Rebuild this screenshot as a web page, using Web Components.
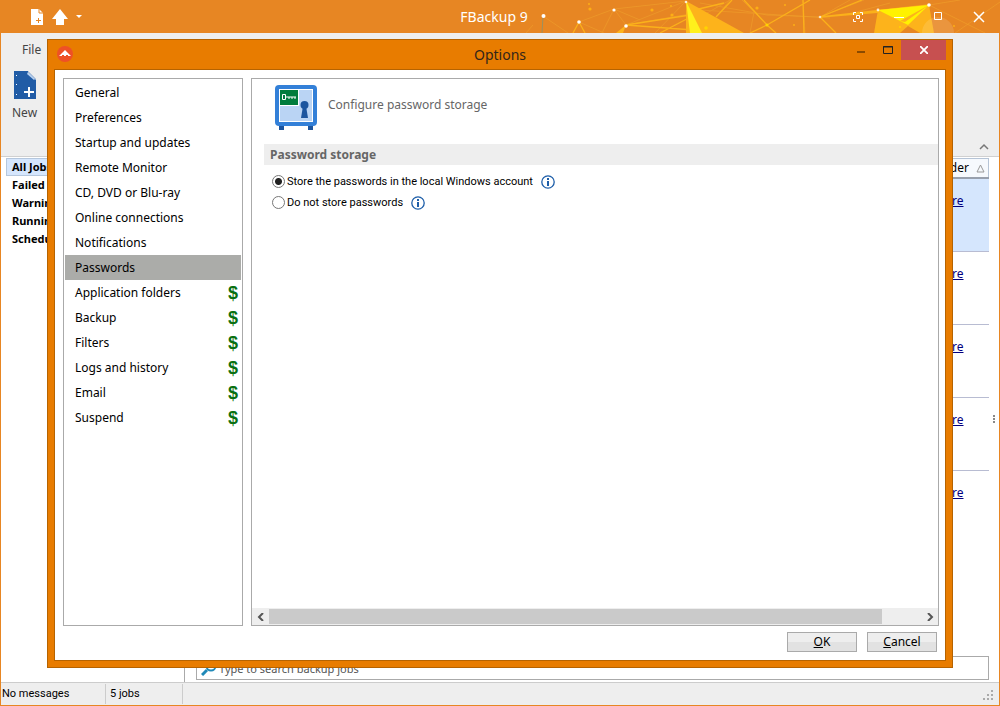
<!DOCTYPE html>
<html lang="en">
<head>
<meta charset="utf-8">
<title>FBackup 9</title>
<style>
html, body { margin: 0; height: 100%; }
body { font-family: "Noto Sans", "DejaVu Sans", sans-serif; font-size: 12px; color: #000; }
</style>
</head>
<body>
<fb-app></fb-app>
<script>
const define = (name, html, setup) => {
  const template = document.createElement('template');
  template.innerHTML = html;
  customElements.define(name, class extends HTMLElement {
    constructor() {
      super();
      this.attachShadow({ mode: 'open' }).append(template.content.cloneNode(true));
    }
    connectedCallback() { if (setup) setup(this, this.shadowRoot); }
  });
};

define('fb-titlebar', `
<style>
:host { display: grid; grid-template-columns: 1fr auto 1fr; align-items: center; height: 33px; background: #e78623; color: #fff; position: relative; overflow: hidden; }
.art { position: absolute; right: 0; top: 0; width: 480px; height: 33px; }
.tools, .win { display: flex; align-items: center; position: relative; }
.tools { padding-left: 30px; gap: 8px; }
.win { justify-content: flex-end; gap: 30px; padding-right: 15px; }
h1 { margin: 0; font: 14px/20px "Noto Sans", sans-serif; position: relative; padding-right: 12px; }
button { border: 0; padding: 0; background: none; display: block; color: #fff; }
svg { display: block; }
</style>
<svg class="art" viewBox="520 0 480 33" preserveAspectRatio="xMaxYMid slice" aria-hidden="true">
  <g stroke="#f0a02c" fill="none" stroke-width="1" opacity=".6">
    <path d="M526 33 533 25M543 16 568 33M579 22 614 9 626 25M614 9 686 1M602 33 614 9 640 20M579 22 604 33M626 25 686 1M626 25 690 14M655 33 686 1"/>
    <path d="M700 3 767 15 820 17 864 0M730 0 700 17M716 17 730 0M803 0 805 33M820 17 850 0M767 25 742 0M750 33 754 12M700 10 830 18M929 5 985 33M955 33 1000 2M929 5 960 0M845 15 890 3"/>
  </g>
  <g stroke="#fbb11a" fill="none" stroke-width="1.3">
    <path d="M573 33 579 22 585 33M626 25 690 15M626 25 720 32M660 33 700 12M744 0 767 25 776 33M767 25 810 0M767 25 750 33M803 0 804 33M820 17 929 5M820 17 836 33M820 17 862 0M820 17 880 12M716 17 732 0M686 12 724 3"/>
  </g>
  <path d="m543 16-1 17" stroke="#9b9060" fill="none"/>
  <path d="m616 33 10-8-3 8z" fill="#fdb31b"/>
  <path d="m686 1 58 32h-58z" fill="#fdb31b"/>
  <path d="m686 1 16 32h-12z" fill="#fff01c"/>
  <path d="m878 10 51-5 5 28h-60z" fill="#fdb31b"/>
  <path d="m878 10 51-5-21 20z" fill="#fff200"/>
  <path d="m900 21 29-16-24 17z" fill="#fdb31b"/>
  <path d="m900 33 8-7 12 7z" fill="#e78623"/>
  <g fill="#fff"><circle cx="543.500" cy="16" r="2"/><circle cx="579" cy="22" r="1.8"/><circle cx="614" cy="10" r="1.6"/><circle cx="626" cy="26" r="1.8"/><circle cx="929" cy="5" r="1.8"/><circle cx="878" cy="10" r="1.4" opacity=".8"/><circle cx="820" cy="17" r="1.3" opacity=".7"/><circle cx="686" cy="2" r="1.3" opacity=".8"/></g>
  <g fill="#ffd400"><circle cx="767" cy="25" r="1.5"/><circle cx="706" cy="28" r="1.8"/><circle cx="900" cy="27" r="1"/></g>
  <g fill="#fcae16"><circle cx="590" cy="9" r="1.6"/><circle cx="652" cy="10" r="1.6"/><circle cx="672" cy="15" r="1.6"/><circle cx="757" cy="8" r="1.6"/><circle cx="794" cy="25" r="1"/><circle cx="671" cy="6" r="1"/><circle cx="589" cy="4" r="1"/><circle cx="785" cy="5" r="1"/><circle cx="954" cy="26" r="1"/></g>
  <g fill="#fff" opacity=".12"><circle cx="938" cy="33" r="16"/><circle cx="938" cy="33" r="10"/><circle cx="938" cy="33" r="5"/></g>
</svg>
<div class="tools">
  <button aria-label="New backup"><svg width="14" height="16"><path d="M1 0h8l4 4v12H1z" fill="#fff"/><path d="M9 0v4h4" fill="none" stroke="#e78623"/><path d="M8.500 9v5M6 11.500h5" stroke="#e78623"/></svg></button>
  <button aria-label="Upgrade"><svg width="16" height="16"><path d="m8 0 8 10h-4v6H4v-6H0z" fill="#fff"/></svg></button>
  <button aria-label="More tools"><svg width="6" height="4"><path d="M0 0h6L3 3z" fill="#fff"/></svg></button>
</div>
<h1>FBackup 9</h1>
<div class="win">
  <button aria-label="Focus"><svg width="12" height="12" fill="none" stroke="#fff"><path d="M1.500 4V1.500H4M8 1.500h2.500V4M10.500 8v2.500H8M4 10.500H1.500V8M4.500 4.500h3v3h-3z"/></svg></button>
  <button aria-label="Minimize"><svg width="10" height="12"><path d="M0 6.500h10" stroke="#fff"/></svg></button>
  <button aria-label="Maximize"><svg width="9" height="9"><path d="M.5.5h7v7h-7z" fill="none" stroke="#fff"/></svg></button>
  <button aria-label="Close"><svg width="12" height="12"><path d="m1 1 10 10M11 1 1 11" fill="none" stroke="#fff" stroke-width="1.500"/></svg></button>
</div>`);

define('fb-ribbon', `
<style>
:host { display: flex; flex-direction: column; height: 123px; background: #eee; border-bottom: 1px solid #d0d0d0; color: #444; position: relative; }
a { color: inherit; text-decoration: none; padding: 8px 0 0 21px; line-height: 18px; }
.new { border: 0; background: none; padding: 12px 0 0 11px; color: inherit; font: inherit; line-height: 18px; align-self: flex-start; display: grid; justify-items: center; gap: 5px; }
.fold { position: absolute; right: 9px; bottom: 6px; border: 0; padding: 0; background: none; }
svg { display: block; }
</style>
<a href="#file">File</a>
<button class="new"><svg width="24" height="28"><path d="M1 0h14l8 8v20H1z" fill="#215ca6"/><path d="M15 0v1l8 8V8z" fill="#eee"/><path d="m15 1 7 7-1 1-7-6z" fill="#b9d1ef"/><path d="M16 16v10M11 21h10" stroke="#fff" stroke-width="2"/><path d="M3 4h1v1H3zM3 13h1v1H3zM3 23h1v1H3z" fill="#fff"/></svg>New</button>
<button class="fold" aria-label="Collapse ribbon"><svg width="12" height="8"><path d="m2 7 4-4 4 4" fill="none" stroke="#777" stroke-width="1.500"/></svg></button>`);

define('fb-filters', `
<style>
:host { display: block; width: 178px; flex: none; padding: 1px 0 0 5px; border-right: 1px solid #aaa; }
ul { margin: 0; padding: 0; list-style: none; }
a { display: block; height: 18px; box-sizing: border-box; padding-left: 6px; font-size: 11px; line-height: 18px; color: #000; font-weight: 700; text-decoration: none; }
a.on { background: #d5e6fd; outline: 1px solid #b5c7dd; outline-offset: -1px; }
</style>
<ul><li><a class="on" href="#all">All Jobs</a></li><li><a href="#failed">Failed</a></li><li><a href="#warnings">Warnings</a></li><li><a href="#running">Running</a></li><li><a href="#scheduled">Scheduled</a></li></ul>`);

define('fb-jobs', `
<style>
:host { display: flex; flex-direction: column; flex: 1; padding: 1px 10px 2px 11px; position: relative; }
table { width: 100%; border-collapse: collapse; }
th { height: 18px; padding: 0 3px 0 0; border: 1px solid #b6c4d6; border-bottom: 2px solid #98a0ad; background: #f6f9fd; font-weight: 400; font-size: 12px; text-align: right; line-height: 16px; }
th svg { margin-left: 4px; vertical-align: -1px; }
td { height: 59px; padding: 13px 25px 0 0; border-bottom: 1px solid #b8bcd2; text-align: right; vertical-align: top; line-height: 18px; }
tr:last-child td { border: 0; }
tr.on td { background: #d5e6fd; }
a { color: #000080; }
.search { display: flex; align-items: center; margin-top: auto; border: 1px solid #aaa; height: 22px; padding-left: 4px; color: #555; }
input { flex: 1; border: 0; padding: 0 0 0 2px; outline: 0; font: inherit; font-size: 11px; background: none; height: 20px; }
input::placeholder { color: #555; opacity: 1; }
.dots { position: absolute; right: 3px; top: 258px; }
</style>
<table>
<thead><tr><th>Folder <svg width="9" height="9" aria-hidden="true"><path d="m4.500 1 3.500 7H1z" fill="none" stroke="#999"/></svg></th></tr></thead>
<tbody><tr class="on"><td><a href="#1">Restore</a></td></tr><tr><td><a href="#2">Restore</a></td></tr><tr><td><a href="#3">Restore</a></td></tr><tr><td><a href="#4">Restore</a></td></tr><tr><td><a href="#5">Restore</a></td></tr></tbody>
</table>
<label class="search"><svg width="16" height="16" aria-hidden="true" fill="none" stroke="#2089b8"><circle cx="10" cy="6" r="4.500" stroke-width="2"/><path d="m6 10-5 5" stroke-width="3"/></svg><input aria-label="Search" placeholder="Type to search backup jobs"></label>
<svg class="dots" width="3" height="9" aria-hidden="true"><path d="M0 0h2v2H0zM0 3h2v2H0zM0 6h2v2H0z" fill="#888"/></svg>`);

define('fb-status', `
<style>
:host { display: flex; align-items: stretch; height: 22px; background: #eee; border-top: 1px solid #ccc; font-family: Roboto, sans-serif; font-size: 11px; line-height: 22px; }
span { box-sizing: border-box; border-right: 1px solid #ccc; margin: 1px 0; line-height: 20px; }
.a { width: 105px; padding-left: 1px; } .b { width: 77px; padding-left: 4px; }
svg { margin: auto 4px 4px auto; }
</style>
<span class="a">No messages</span><span class="b">5 jobs</span>
<svg width="12" height="11" aria-hidden="true"><path d="M0 8h2v2H0zM4 8h2v2H4zM8 8h2v2H8zM4 4h2v2H4zM8 4h2v2H8zM8 0h2v2H8z" fill="#aaa"/></svg>`);

define('fb-nav', `
<style>
:host { display: block; width: 178px; flex: none; border: 1px solid #aaa; }
ul { margin: 0; padding: 1px; list-style: none; }
a { display: flex; align-items: center; justify-content: space-between; height: 25px; padding: 0 3px 0 10px; color: #000; text-decoration: none; }
a.on { background: #abaca9; }
b { font: 700 18px/24px "Liberation Sans", sans-serif; color: #0b7012; }
</style><ul></ul>`, (el, root) => {
  const free = ['General', 'Preferences', 'Startup and updates', 'Remote Monitor', 'CD, DVD or Blu-ray', 'Online connections', 'Notifications', 'Passwords'];
  const paid = ['Application folders', 'Backup', 'Filters', 'Logs and history', 'Email', 'Suspend'];
  root.querySelector('ul').innerHTML =
    free.map(t => `<li><a href="#"${t === 'Passwords' ? ' class="on" aria-current="page"' : ''}>${t}</a></li>`).join('') +
    paid.map(t => `<li><a href="#">${t}<b>$</b></a></li>`).join('');
});

define('fb-choice', `
<style>
:host { display: flex; align-items: center; height: 21px; font-family: Roboto, sans-serif; font-size: 11px; gap: 8px; }
label { display: flex; align-items: center; gap: 2px; white-space: nowrap; }
input { appearance: none; box-sizing: border-box; width: 13px; height: 13px; margin: 0; border: 1px solid #777; border-radius: 50%; background: #fff; }
input:checked { background: radial-gradient(circle, #222 0 3px, #fff 4px); }
button { border: 0; padding: 0; background: none; }
svg { display: block; }
</style>
<label><input type="radio" name="storage"><span><slot></slot></span></label>
<button aria-label="Information"><svg width="14" height="14" fill="none" stroke="#1c5da8"><circle cx="7" cy="7" r="6.200" stroke-width="1.300"/><path d="M7 6v5M7 3v2" stroke-width="2"/></svg></button>`,
(el, root) => { root.querySelector('input').checked = el.hasAttribute('checked'); });

define('fb-scroll', `
<style>
:host { display: flex; height: 17px; background: #eee; align-items: center; }
button { width: 17px; height: 17px; border: 0; padding: 0; background: none; display: grid; place-items: center; }
.track { flex: 1; height: 15px; } .thumb { width: 94%; height: 15px; background: #cacaca; }
</style>
<button aria-label="Scroll left"><svg width="8" height="8"><path d="M6 0 2 4l4 4" fill="none" stroke="#555" stroke-width="2"/></svg></button>
<div class="track"><div class="thumb"></div></div>
<button aria-label="Scroll right"><svg width="8" height="8"><path d="m2 0 4 4-4 4" fill="none" stroke="#555" stroke-width="2"/></svg></button>`);

define('fb-passwords', `
<style>
:host { display: flex; flex-direction: column; flex: 1; border: 1px solid #aaa; min-width: 0; }
header { display: flex; gap: 10px; padding: 5px 0 0 22px; height: 48px; color: #666; line-height: 42px; }
h2 { margin: 12px 0 6px 12px; padding-left: 6px; height: 21px; font: 700 12px/21px "Noto Sans", sans-serif; background: #eee; color: #666; }
form { padding-left: 20px; flex: 1; }
</style>
<header><svg width="44" height="47" aria-hidden="true"><path d="M5 40h5v6H5zM34 40h5v6h-5z" fill="#1c559f"/><rect x="1" y="1" width="42" height="41" rx="4" fill="#3380d8"/><path d="M5 5h34v33H5z" fill="#fff"/><path d="M6 6h32v31H6z" fill="#bad4f4"/><path d="M5 5h20v17H5z" fill="#fff"/><path d="M6 6h18v15H6z" fill="#007c3c"/><path d="M8.500 10.500h3v5h-3zM12 13h10M15 13v2M18 13v2M21 13v2" fill="none" stroke="#fff"/><circle cx="30.500" cy="21" r="4" fill="#1c559f"/><path d="M29 22h3l2 12h-7z" fill="#1c559f"/></svg><span>Configure password storage</span></header>
<h2>Password storage</h2>
<form><fb-choice checked>Store the passwords in the local Windows account</fb-choice><fb-choice>Do not store passwords</fb-choice></form>
<fb-scroll></fb-scroll>`);

define('fb-options', `
<style>
:host { position: absolute; inset: 39px 47px 38px; box-sizing: border-box; border: 1px solid #b66300; background: #e87c00; padding: 0 6px 6px; display: flex; flex-direction: column; }
.bar { height: 29px; display: grid; grid-template-columns: 1fr auto 1fr; }
h1 { margin: 0; font: 14px/29px "Noto Sans", sans-serif; color: #33251a; }
.logo { margin: 6px 0 0 3px; }
.win { display: flex; justify-content: flex-end; align-items: flex-start; }
button { font: inherit; box-sizing: border-box; }
.win button { border: 0; padding: 0; background: none; height: 20px; display: grid; place-items: center; width: 27px; }
.win .x { background: #c75050; width: 45px; }
.body { flex: 1; background: #fff; border: 1px solid #b66300; padding: 8px; display: flex; flex-direction: column; gap: 6px; }
.panes { flex: 1; display: flex; gap: 8px; margin-right: -2px; }
footer { display: flex; justify-content: flex-end; gap: 10px; }
footer button { width: 70px; height: 20px; padding: 0; border: 1px solid #aaa; background: linear-gradient(#eee 50%, #e2e2e2 50%); color: #000; line-height: 18px; }
</style>
<div class="bar"><svg class="logo" width="16" height="16" aria-hidden="true"><circle cx="8" cy="8" r="8" fill="#ee5126"/><path d="m8 4 6 6h-3v-1H9v1H7V9H5v1H2z" fill="#fff"/></svg><h1>Options</h1>
<div class="win"><button aria-label="Minimize"><svg width="8" height="8"><path d="M0 6h8" stroke="#8a4a00" stroke-width="2"/></svg></button><button aria-label="Maximize"><svg width="10" height="8"><path d="M.5.5h9v7h-9zM0 1h10" fill="none" stroke="#222"/></svg></button><button class="x" aria-label="Close"><svg width="8" height="8"><path d="m0 0 8 8M8 0 0 8" stroke="#fff" stroke-width="1.800"/></svg></button></div></div>
<div class="body"><div class="panes"><fb-nav></fb-nav><fb-passwords></fb-passwords></div><footer><button><u>O</u>K</button><button><u>C</u>ancel</button></footer></div>`);

define('fb-app', `
<style>
:host { display: flex; flex-direction: column; box-sizing: border-box; min-height: 100vh; position: relative; background: #fff; }
.frame { flex: 1; display: flex; flex-direction: column; border: 1px solid #e78623; border-top: 0; }
main { flex: 1; display: flex; }
</style>
<fb-titlebar></fb-titlebar>
<div class="frame"><fb-ribbon></fb-ribbon><main><fb-filters></fb-filters><fb-jobs></fb-jobs></main><fb-status></fb-status></div>
<fb-options role="dialog" aria-label="Options"></fb-options>`);
</script>
</body>
</html>
